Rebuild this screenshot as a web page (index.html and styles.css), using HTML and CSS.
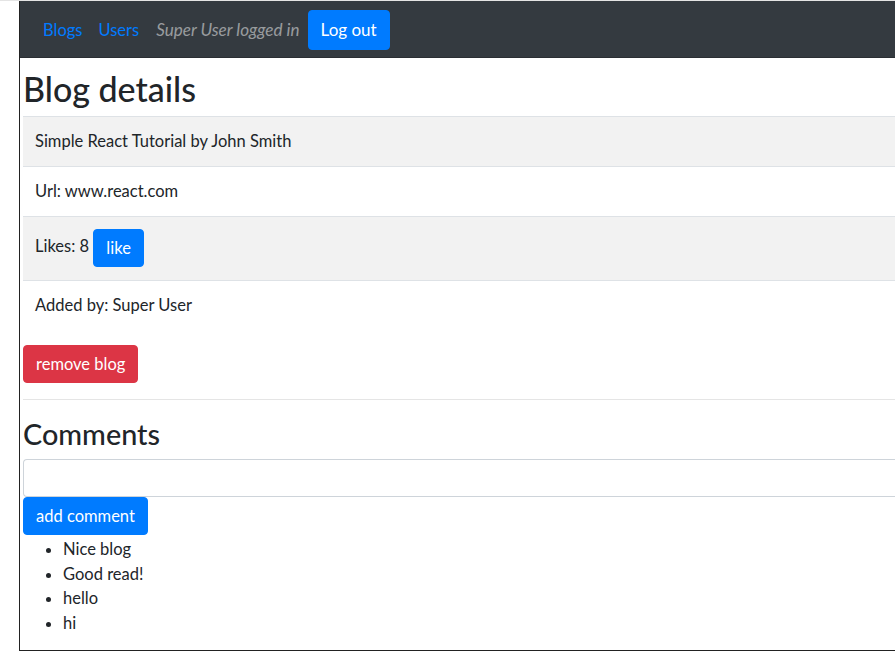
FILE: index.html
```html
<!DOCTYPE html>
<html>
<head>
<meta charset="utf-8">
<link rel="stylesheet" href="styles.css">
</head>
<body>
<div class="frame">
  <nav class="navbar">
    <a class="nav-link" href="#">Blogs</a>
    <a class="nav-link" href="#">Users</a>
    <em class="nav-text">Super User logged in</em>
    <button class="btn btn-primary btn-nav">Log out</button>
  </nav>
  <div class="content">
    <h2 class="title">Blog details</h2>
    <table class="table">
      <tbody>
        <tr class="striped"><td>Simple React Tutorial by John Smith</td></tr>
        <tr><td>Url: www.react.com</td></tr>
        <tr class="striped"><td class="with-btn">Likes: 8 <button class="btn btn-primary">like</button></td></tr>
        <tr><td>Added by: Super User</td></tr>
      </tbody>
    </table>
    <button class="btn btn-danger">remove blog</button>
    <hr class="divider">
    <h3 class="subtitle">Comments</h3>
    <input class="form-control" type="text">
    <button class="btn btn-primary">add comment</button>
    <ul class="comments">
      <li>Nice blog</li>
      <li>Good read!</li>
      <li>hello</li>
      <li>hi</li>
    </ul>
  </div>
</div>
</body>
</html>
```
FILE: styles.css
```css
* { box-sizing: border-box; }
html, body { margin: 0; padding: 0; background: #fff; }
body {
  font-family: "Lato", "Liberation Sans", sans-serif;
  font-size: 16.5px;
  line-height: 24px;
  color: #212529;
  border-top: 1px solid #e4e4e4;
}
.frame {
  margin-left: 19px;
  height: 650px;
  border-left: 1px solid #222;
  border-bottom: 1px solid #222;
  overflow: hidden;
}
.navbar {
  display: flex;
  align-items: center;
  background: #343a40;
  height: 57px;
  padding: 1px 16px 0;
  border-bottom: 1px solid #2a2e33;
}
.nav-link {
  color: #007bff;
  text-decoration: none;
  padding: 8px 8px;
}
.nav-link:first-child { padding-left: 7px; }
.nav-text {
  color: rgba(255,255,255,.5);
  font-size: 17.1px;
  margin: 0 8px 0 9px;
}
.btn {
  display: inline-block;
  font-family: inherit;
  font-size: 16.5px;
  line-height: 24px;
  padding: 6px 12px;
  border: 1px solid transparent;
  border-radius: 4px;
  color: #fff;
  cursor: pointer;
  vertical-align: middle;
}
.btn-primary { background: #007bff; border-color: #007bff; }
.btn-danger { background: #dc3545; border-color: #dc3545; }
.btn-nav { padding: 7px 12px; font-size: 17px; }
.content { padding-left: 3px; }
.title {
  font-size: 34px;
  font-weight: 500;
  line-height: 1.2;
  margin: 11px 0 6px;
}
.table {
  width: 100%;
  border-collapse: collapse;
  margin-bottom: 15px;
}
.table td {
  padding: 12px;
  line-height: 25px;
  border-top: 1px solid #dee2e6;
  vertical-align: middle;
}
.table td.with-btn { padding: 12px 12px 13px; }
.table tr.striped { background: #f2f2f2; }
.divider {
  border: 0;
  border-top: 1px solid rgba(0,0,0,.1);
  margin: 16px 0 17px;
}
.subtitle {
  font-size: 28.8px;
  font-weight: 500;
  line-height: 1.2;
  margin: 0 0 8px;
}
.form-control {
  display: block;
  width: 100%;
  height: 38px;
  border: 1px solid #ced4da;
  border-right: 0;
  border-radius: 4px 0 0 4px;
  padding: 6px 12px;
  font-family: inherit;
  font-size: 16px;
}
.comments {
  margin: 2px 0 0;
  padding-left: 40px;
}
.comments li { line-height: 24.4px; }
```
